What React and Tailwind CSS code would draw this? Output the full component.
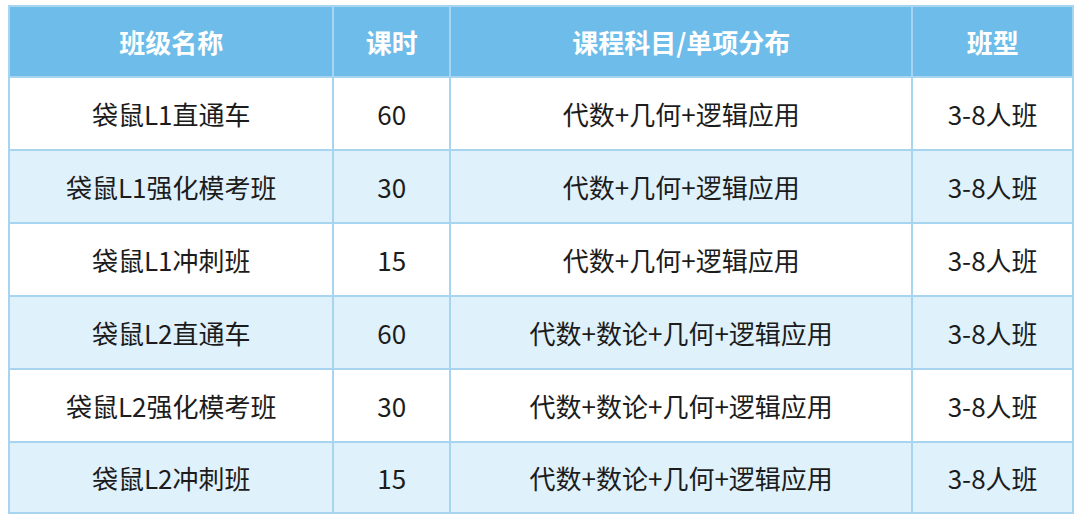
const rows = [
  { name: '袋鼠L1直通车', hours: '60', subjects: '代数+几何+逻辑应用', type: '3-8人班' },
  { name: '袋鼠L1强化模考班', hours: '30', subjects: '代数+几何+逻辑应用', type: '3-8人班' },
  { name: '袋鼠L1冲刺班', hours: '15', subjects: '代数+几何+逻辑应用', type: '3-8人班' },
  { name: '袋鼠L2直通车', hours: '60', subjects: '代数+数论+几何+逻辑应用', type: '3-8人班' },
  { name: '袋鼠L2强化模考班', hours: '30', subjects: '代数+数论+几何+逻辑应用', type: '3-8人班' },
  { name: '袋鼠L2冲刺班', hours: '15', subjects: '代数+数论+几何+逻辑应用', type: '3-8人班' },
];

export default function App() {
  return (
    <div
      className="w-[1080px] h-[516px] bg-white pl-[8px] pt-[5px]"
      style={{ fontFamily: '"Noto Sans CJK SC", "Noto Sans", sans-serif' }}
    >
      <table className="w-[1066px] border-collapse border-2 border-[#b5dbf1] text-[26px] text-[#1c1c1c]">
        <colgroup>
          <col className="w-[325px]" />
          <col className="w-[117px]" />
          <col className="w-[463px]" />
          <col className="w-[161px]" />
        </colgroup>
        <thead>
          <tr className="h-[71px] bg-[#6dbce9] text-white font-bold">
            <th className="border-2 border-[#a7d4ee]">班级名称</th>
            <th className="border-2 border-[#a7d4ee]">课时</th>
            <th className="border-2 border-[#a7d4ee]">课程科目/单项分布</th>
            <th className="border-2 border-[#a7d4ee]">班型</th>
          </tr>
        </thead>
        <tbody>
          {rows.map((r, i) => (
            <tr
              key={i}
              className={`${i === rows.length - 1 ? 'h-[71px]' : 'h-[73px]'} ${i % 2 === 1 ? 'bg-[#dff1fb]' : 'bg-white'}`}
            >
              <td className="border-2 border-[#a7d4ee] text-center">{r.name}</td>
              <td className="border-2 border-[#a7d4ee] text-center">{r.hours}</td>
              <td className="border-2 border-[#a7d4ee] text-center">{r.subjects}</td>
              <td className="border-2 border-[#a7d4ee] text-center">{r.type}</td>
            </tr>
          ))}
        </tbody>
      </table>
    </div>
  );
}
